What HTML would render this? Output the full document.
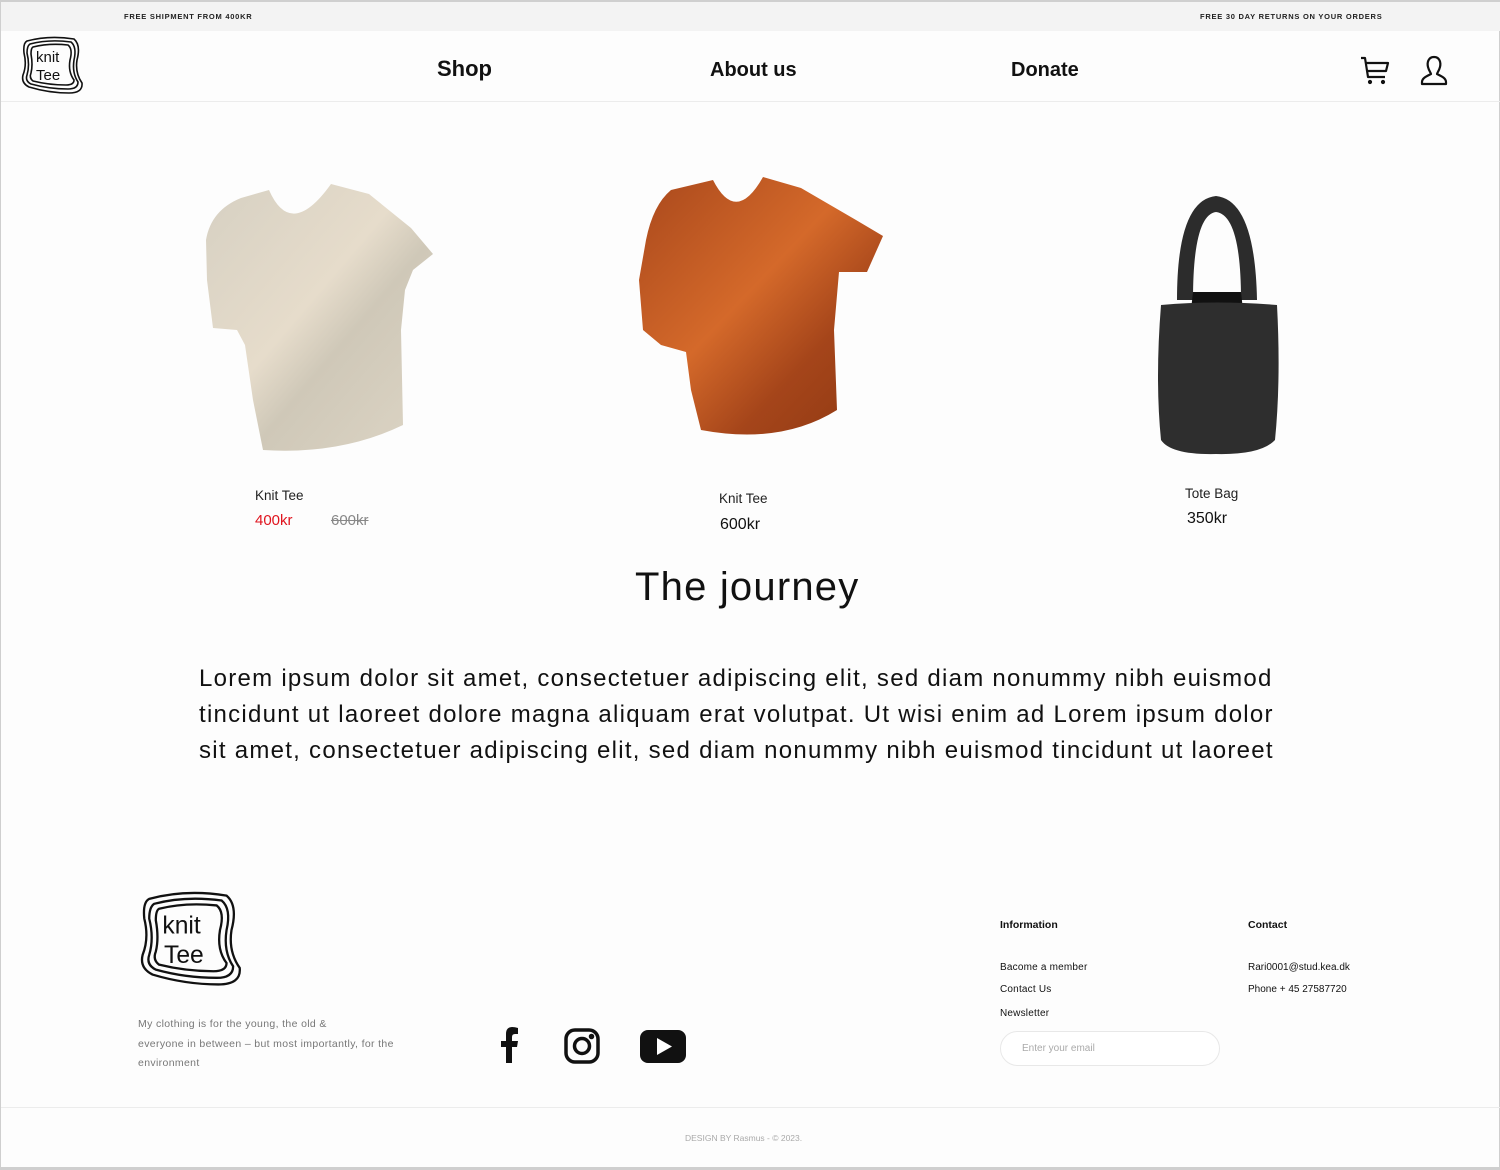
<!DOCTYPE html>
<html><head><meta charset="utf-8"><style>
*{margin:0;padding:0;box-sizing:border-box}
body{width:1500px;height:1170px;position:relative;background:#fdfdfd;font-family:"Liberation Sans",sans-serif;color:#111;overflow:hidden;border:1px solid #cfcfcf;border-top:2px solid #cfcfcf;border-bottom:3px solid #cfcfcf}
.a{position:absolute;white-space:nowrap}
.top{position:absolute;left:0;top:0;width:1500px;height:29px;background:#f3f3f3}
.tiny{font-size:7.5px;font-weight:bold;letter-spacing:0.75px;color:#222}
.nav{font-size:20px;font-weight:bold;color:#111}
.p{font-size:24px;letter-spacing:1.27px;color:#111;line-height:36px}
</style></head><body>
<div class="top"></div>
<div class="a tiny" style="left:123px;top:10px">FREE SHIPMENT FROM 400KR</div>
<div class="a tiny" style="left:1199px;top:10px">FREE 30 DAY RETURNS ON YOUR ORDERS</div>
<div style="position:absolute;left:0;top:99px;width:1500px;height:1px;background:#ececec"></div>

<svg class="a" style="left:18px;top:33px" width="68" height="62" viewBox="0 0 68 62" fill="none" stroke="#111" stroke-width="1.6">
<path d="M8 6 Q30 0 55 4 Q62 10 58 25 Q56 38 63 48 Q64 58 50 58 Q30 58 10 52 Q2 48 4 40 Q8 30 5 18 Q4 8 8 6Z"/>
<path d="M11 9 Q30 4 52 7 Q58 12 55 25 Q53 38 59 47 Q59 54 49 54 Q30 54 12 49 Q6 46 8 40 Q11 30 8 18 Q8 11 11 9Z"/>
<path d="M14 12 Q30 8 49 10 Q54 14 51 25 Q49 37 55 45 Q55 50 47 50 Q30 50 14 46 Q10 43 12 38 Q14 30 12 19 Q12 13 14 12Z"/>
<text x="17" y="27" font-family="Liberation Sans,sans-serif" font-size="15" fill="#111" stroke="none">knit</text>
<text x="17" y="45" font-family="Liberation Sans,sans-serif" font-size="15" fill="#111" stroke="none">Tee</text>
</svg>

<div class="a nav" style="left:436px;top:54px;font-size:22px">Shop</div>
<div class="a nav" style="left:709px;top:57px">About us</div>
<div class="a nav" style="left:1010px;top:57px">Donate</div>

<svg class="a" style="left:1358px;top:53px" width="34" height="32" viewBox="0 0 34 32" fill="none" stroke="#111" stroke-width="2.2" stroke-linejoin="round">
<path d="M2 3 H6 L9 22 H26"/><path d="M7 8 H29 L27 16 H8"/><circle cx="11" cy="27" r="1" fill="#111"/><circle cx="24" cy="27" r="1" fill="#111"/>
</svg>
<svg class="a" style="left:1418px;top:53px" width="30" height="32" viewBox="0 0 30 32" fill="none" stroke="#111" stroke-width="2.2" stroke-linejoin="round">
<path d="M15 2 C9 2 8 8 9 12 C10 16 12 18 12 19 C8 21 3 23 3 27 V29 H27 V27 C27 23 22 21 18 19 C18 18 20 16 21 12 C22 8 21 2 15 2Z"/>
</svg>

<svg class="a" style="left:0;top:158px" width="1500" height="310" viewBox="0 160 1500 310">
<defs>
<linearGradient id="w" x1="0" y1="0" x2="1" y2="1"><stop offset="0" stop-color="#d6d0c2"/><stop offset="0.45" stop-color="#e6dccb"/><stop offset="0.6" stop-color="#cfc8b8"/><stop offset="1" stop-color="#ddd5c5"/></linearGradient>
<linearGradient id="o" x1="0" y1="0" x2="1" y2="1"><stop offset="0" stop-color="#a9481c"/><stop offset="0.45" stop-color="#d4692a"/><stop offset="0.7" stop-color="#a5451a"/><stop offset="1" stop-color="#8e3812"/></linearGradient>
</defs>
<path fill="url(#w)" d="M240 198 L268 190 Q290 240 330 184 L368 194 L410 228 L432 254 L412 270 L404 290 L400 330 L402 425 Q340 455 262 450 L252 400 L244 345 L236 330 L212 328 L206 280 L205 240 Q210 210 240 198Z"/>
<path fill="url(#o)" d="M670 190 L712 180 Q735 225 762 177 L800 188 L855 220 L882 236 L866 272 L838 272 L833 330 L836 410 Q780 445 700 430 L690 390 L685 352 L660 345 L642 330 L638 280 L645 240 Q652 205 670 190Z"/>
<path fill="#2c2c2c" d="M1176 300 Q1176 200 1215 196 Q1254 200 1256 300 L1240 300 Q1240 215 1215 212 Q1192 215 1192 300Z"/>
<path fill="#111" d="M1192 292 H1240 L1242 310 H1190Z"/>
<path fill="#2e2e2e" d="M1160 305 Q1215 300 1276 305 Q1280 380 1274 440 Q1260 455 1215 454 Q1170 455 1160 440 Q1154 380 1160 305Z"/>
</svg>

<div class="a" style="left:254px;top:486px;font-size:13.5px;color:#222">Knit Tee</div>
<div class="a" style="left:254px;top:510px;font-size:15px;color:#e0141e">400kr</div>
<div class="a" style="left:330px;top:510px;font-size:15px;color:#888;text-decoration:line-through">600kr</div>
<div class="a" style="left:718px;top:489px;font-size:13.5px;color:#222">Knit Tee</div>
<div class="a" style="left:719px;top:514px;font-size:16px;color:#111">600kr</div>
<div class="a" style="left:1184px;top:484px;font-size:13.5px;color:#222">Tote Bag</div>
<div class="a" style="left:1186px;top:508px;font-size:16px;color:#111">350kr</div>

<div class="a" style="left:634px;top:563px;font-size:40px;letter-spacing:1.2px;color:#111">The journey</div>
<div class="a p" style="left:198px;top:659px">Lorem ipsum dolor sit amet, consectetuer adipiscing elit, sed diam nonummy nibh euismod<br>tincidunt ut laoreet dolore magna aliquam erat volutpat. Ut wisi enim ad Lorem ipsum dolor<br>sit amet, consectetuer adipiscing elit, sed diam nonummy nibh euismod tincidunt ut laoreet</div>

<svg class="a" style="left:134px;top:887px" width="114" height="102" viewBox="0 0 68 62" fill="none" stroke="#111" stroke-width="1.4">
<path d="M8 6 Q30 0 55 4 Q62 10 58 25 Q56 38 63 48 Q64 58 50 58 Q30 58 10 52 Q2 48 4 40 Q8 30 5 18 Q4 8 8 6Z"/>
<path d="M11 9 Q30 4 52 7 Q58 12 55 25 Q53 38 59 47 Q59 54 49 54 Q30 54 12 49 Q6 46 8 40 Q11 30 8 18 Q8 11 11 9Z"/>
<path d="M14 12 Q30 8 49 10 Q54 14 51 25 Q49 37 55 45 Q55 50 47 50 Q30 50 14 46 Q10 43 12 38 Q14 30 12 19 Q12 13 14 12Z"/>
<text x="16" y="27" font-family="Liberation Sans,sans-serif" font-size="15" fill="#111" stroke="none">knit</text>
<text x="17" y="45" font-family="Liberation Sans,sans-serif" font-size="15" fill="#111" stroke="none">Tee</text>
</svg>
<div class="a" style="left:137px;top:1013px;font-size:10.5px;letter-spacing:0.35px;line-height:19.5px;color:#777">My clothing is for the young, the old &amp;<br>everyone in between – but most importantly, for the<br>environment</div>

<svg class="a" style="left:497px;top:1025px" width="22" height="36" viewBox="0 0 22 36"><path fill="#111" d="M14 36 V20 H19 L20 14 H14 V10 Q14 7 17 7 H20 V1 Q17 0 14 0 Q8 0 8 7 V14 H3 V20 H8 V36Z"/></svg>
<svg class="a" style="left:563px;top:1026px" width="36" height="36" viewBox="0 0 36 36" fill="none" stroke="#111" stroke-width="3.5"><rect x="2" y="2" width="32" height="32" rx="9"/><circle cx="18" cy="18" r="7.5"/><circle cx="27.5" cy="8.5" r="1" fill="#111"/></svg>
<svg class="a" style="left:639px;top:1028px" width="46" height="33" viewBox="0 0 46 33"><rect x="0" y="0" width="46" height="33" rx="8" fill="#111"/><path d="M17 8 L32 16.5 L17 25Z" fill="#fff"/></svg>

<div class="a" style="left:999px;top:917px;font-size:10.5px;font-weight:bold">Information</div>
<div class="a" style="left:999px;top:960px;font-size:10px;letter-spacing:0.2px">Bacome a member</div>
<div class="a" style="left:999px;top:982px;font-size:10px;letter-spacing:0.2px">Contact Us</div>
<div class="a" style="left:999px;top:1006px;font-size:10px;letter-spacing:0.2px">Newsletter</div>
<div class="a" style="left:999px;top:1029px;width:220px;height:35px;border:1px solid #e8e8e8;border-radius:18px;background:#fff"></div>
<div class="a" style="left:1021px;top:1041px;font-size:10px;color:#aaa">Enter your email</div>
<div class="a" style="left:1247px;top:917px;font-size:10.5px;font-weight:bold">Contact</div>
<div class="a" style="left:1247px;top:960px;font-size:10px">Rari0001@stud.kea.dk</div>
<div class="a" style="left:1247px;top:982px;font-size:10px">Phone + 45 27587720</div>

<div style="position:absolute;left:0;top:1105px;width:1500px;height:1px;background:#ececec"></div>
<div class="a" style="left:684px;top:1131px;font-size:8.5px;color:#aaa">DESIGN BY Rasmus - © 2023.</div>
</body></html>
